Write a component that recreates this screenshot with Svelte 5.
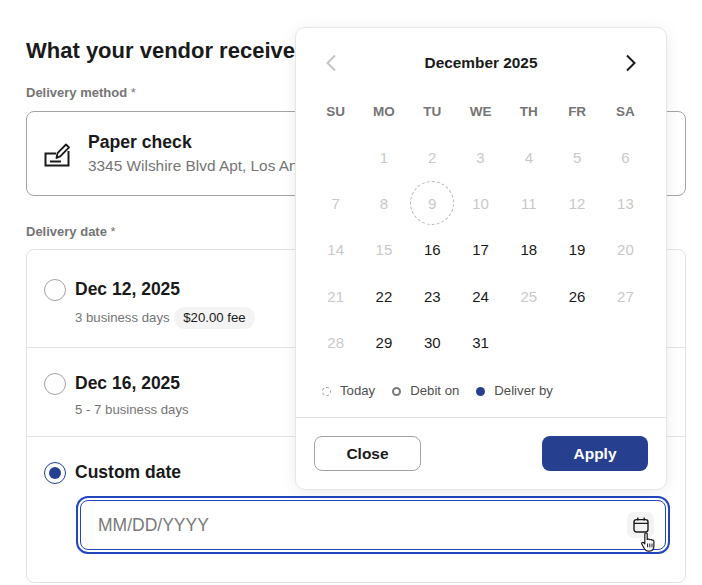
<script>
  const weekdays = ['SU', 'MO', 'TU', 'WE', 'TH', 'FR', 'SA'];
  const active = [16, 17, 18, 19, 22, 23, 24, 26, 29, 30, 31];
  const days = [null, ...Array.from({ length: 31 }, (_, i) => i + 1)];
</script>

<main class="page">
  <h1>What your vendor receives</h1>

  <div class="label">Delivery method <span class="star">*</span></div>
  <div class="method">
    <svg class="check-icon" width="26" height="26" viewBox="0 0 26 26" fill="none" stroke="#1a1a1a" stroke-width="2">
      <path d="M12 12.500H1.500V24.500h23V10" />
      <path d="M12.500 17l1-4.800 8.500-8.700 3 2.900-8.500 8.700z" stroke-linejoin="round" stroke-width="1.800" />
      <path d="M6 20.500h11" />
    </svg>
    <div class="method-text">
      <div class="method-title">Paper check</div>
      <div class="method-sub">3345 Wilshire Blvd Apt, Los Angeles</div>
    </div>
  </div>

  <div class="label date-label">Delivery date <span class="star">*</span></div>
  <div class="dates">
    <div class="row row-1">
      <span class="radio"></span>
      <div>
        <div class="row-title">Dec 12, 2025</div>
        <div class="row-sub">3 business days <span class="fee">$20.00 fee</span></div>
      </div>
    </div>
    <div class="row row-2">
      <span class="radio"></span>
      <div>
        <div class="row-title">Dec 16, 2025</div>
        <div class="row-sub">5 - 7 business days</div>
      </div>
    </div>
    <div class="row row-3">
      <span class="radio on"></span>
      <div class="custom">
        <div class="row-title">Custom date</div>
        <div class="input">
          <span class="placeholder">MM/DD/YYYY</span>
          <span class="cal-btn">
            <svg width="16" height="16" viewBox="0 0 16 16" fill="none" stroke="#1a1a1a" stroke-width="1.400">
              <rect x="1" y="2.600" width="14" height="12.400" rx="2.400" />
              <path d="M1 6.400h14M4.800 .6v3M11.200 .6v3" />
            </svg>
          </span>
          <svg class="hand" width="15" height="20" viewBox="0 0 15 20">
            <path d="M3.800 2.200c0-1.600 2.400-1.600 2.400 0v5.200l.6-.1c.8-.4 1.700-.3 2.100.4.800-.4 1.700-.2 2 .5.900-.3 2 .2 2 1.300v4.600c0 2.800-1.500 5-4.300 5H7c-1.700 0-2.600-.8-3.400-2.100L.9 12.200c-.8-1.300 1-2.600 2-1.400l.9 1.200z" fill="#fff" stroke="#1a1a1a" stroke-width="1.200" stroke-linejoin="round" />
            <path d="M6.600 11.500v3.800M8.800 11.500v3.800M11 11.500v3.800" stroke="#1a1a1a" stroke-width="1" />
          </svg>
        </div>
      </div>
    </div>
  </div>

  <section class="popover">
    <div class="cal-head">
      <svg width="12" height="18" viewBox="0 0 12 18" fill="none" stroke="#c4c4c4" stroke-width="2"><path d="M10 1.500 2.500 9l7.500 7.500" /></svg>
      <strong>December 2025</strong>
      <svg width="12" height="18" viewBox="0 0 12 18" fill="none" stroke="#1a1a1a" stroke-width="2"><path d="M2 1.500 9.500 9 2 16.500" /></svg>
    </div>
    <div class="grid">
      {#each weekdays as w}
        <div class="wd">{w}</div>
      {/each}
      {#each days as d}
        <div class="day" class:active={active.includes(d)}>
          {#if d === 9}<span class="today">{d}</span>{:else if d}{d}{/if}
        </div>
      {/each}
    </div>
    <div class="legend">
      <span class="item"><i class="dot d-today"></i>Today</span>
      <span class="item"><i class="dot d-debit"></i>Debit on</span>
      <span class="item"><i class="dot d-deliver"></i>Deliver by</span>
    </div>
    <div class="cal-foot">
      <button class="btn close">Close</button>
      <button class="btn apply">Apply</button>
    </div>
  </section>
</main>

<style>
  :global(body) {
    margin: 0;
    background: #fff;
  }
  .page {
    position: relative;
    width: 702px;
    height: 585px;
    box-sizing: border-box;
    padding: 38px 16px 0 26px;
    overflow: hidden;
    font-family: "Liberation Sans", Arial, sans-serif;
    color: #1a1a1a;
  }
  h1 {
    margin: 0;
    font-size: 22px;
    line-height: 26px;
    font-weight: 700;
  }
  .label {
    margin-top: 21px;
    font-size: 13px;
    line-height: 16px;
    font-weight: 700;
    color: #757575;
  }
  .star {
    font-weight: 400;
  }
  .date-label {
    margin-top: 28px;
  }
  .method {
    margin-top: 10px;
    height: 85px;
    box-sizing: border-box;
    border: 1px solid #a3a3a3;
    border-radius: 8px;
    display: flex;
    align-items: center;
    gap: 18px;
    padding-left: 17px;
    white-space: nowrap;
    overflow: hidden;
  }
  .check-icon {
    flex: none;
  }
  .method-text {
    padding-bottom: 2px;
  }
  .method-title {
    font-size: 17.600px;
    line-height: 22px;
    font-weight: 700;
  }
  .method-sub {
    margin-top: 4px;
    font-size: 15.400px;
    line-height: 18px;
    color: #757575;
  }
  .dates {
    margin-top: 9px;
    height: 334px;
    box-sizing: border-box;
    border: 1px solid #e3e3e3;
    border-radius: 8px;
  }
  .row {
    display: flex;
    gap: 9px;
    padding: 29px 0 0 17px;
    box-sizing: border-box;
    border-bottom: 1px solid #e3e3e3;
  }
  .row-1 {
    height: 98px;
  }
  .row-2 {
    height: 89px;
    padding-top: 25px;
  }
  .row-3 {
    border-bottom: 0;
    padding-top: 25px;
  }
  .radio {
    flex: none;
    width: 22px;
    height: 22px;
    box-sizing: border-box;
    border: 1px solid #a3a3a3;
    border-radius: 50%;
    background: #fff;
  }
  .radio.on {
    border-color: #26408f;
    position: relative;
  }
  .radio.on::after {
    content: "";
    position: absolute;
    inset: 4px;
    border-radius: 50%;
    background: #26408f;
  }
  .row-title {
    font-size: 17.500px;
    line-height: 20px;
    font-weight: 700;
  }
  .row-sub {
    margin-top: 8px;
    font-size: 13.200px;
    line-height: 22px;
    height: 22px;
    color: #757575;
  }
  .row-2 .row-sub {
    margin-top: 6px;
  }
  .fee {
    display: inline-block;
    margin-left: 1px;
    padding: 0 9px;
    border-radius: 11px;
    background: #f3f3f3;
    color: #1a1a1a;
  }
  .custom {
    flex: 1;
  }
  .input {
    position: relative;
    margin: 14px 15px 0 1px;
    height: 58px;
    box-sizing: border-box;
    border: 2px solid #2346c0;
    border-radius: 12px;
    padding: 2px;
  }
  .input::before {
    content: "";
    position: absolute;
    inset: 2px;
    border: 1px solid #2346c0;
    border-radius: 8px;
  }
  .placeholder {
    position: absolute;
    left: 20px;
    top: 16px;
    font-size: 17.500px;
    line-height: 22px;
    color: #7a7a7a;
  }
  .cal-btn {
    position: absolute;
    right: 14px;
    top: 14px;
    width: 27px;
    height: 26px;
    border-radius: 7px;
    background: #f3f3f3;
    display: flex;
    align-items: center;
    justify-content: center;
  }
  .hand {
    position: absolute;
    right: 12px;
    top: 34px;
  }
  .popover {
    position: absolute;
    left: 295px;
    top: 27px;
    width: 372px;
    height: 463px;
    box-sizing: border-box;
    background: #fff;
    border: 1px solid #e6e6e6;
    border-radius: 10px;
    box-shadow: 0 2px 16px rgba(0, 0, 0, 0.08);
    display: flex;
    flex-direction: column;
  }
  .cal-head {
    display: flex;
    align-items: center;
    justify-content: space-between;
    height: 34px;
    margin-top: 18px;
    padding: 0 29px;
  }
  .cal-head strong {
    font-size: 15.400px;
    font-weight: 700;
    line-height: 34px;
  }
  .grid {
    display: grid;
    grid-template-columns: repeat(7, 48.300px);
    grid-auto-rows: 46.400px;
    margin-top: 7.500px;
    padding-left: 15.500px;
    font-size: 15px;
    color: #c9c9c9;
    text-align: center;
  }
  .wd {
    font-size: 13.500px;
    font-weight: 700;
    color: #757575;
    line-height: 48px;
  }
  .day {
    display: flex;
    align-items: center;
    justify-content: center;
  }
  .day.active {
    color: #1a1a1a;
  }
  .today {
    width: 44px;
    height: 44px;
    box-sizing: border-box;
    border: 1px dashed #b5b5b5;
    border-radius: 50%;
    display: flex;
    align-items: center;
    justify-content: center;
  }
  .legend {
    display: flex;
    gap: 17px;
    padding-left: 26px;
    margin-top: auto;
    font-size: 13.200px;
    line-height: 16px;
    color: #4f4f4f;
    margin-bottom: 18px;
  }
  .item {
    display: flex;
    align-items: center;
    gap: 9px;
  }
  .dot {
    width: 9px;
    height: 9px;
    box-sizing: border-box;
    border-radius: 50%;
  }
  .d-today {
    border: 1px dashed #9a9a9a;
  }
  .d-debit {
    border: 2px solid #7a7a7a;
  }
  .d-deliver {
    background: #26408f;
  }
  .cal-foot {
    display: flex;
    justify-content: space-between;
    border-top: 1px solid #e3e3e3;
    padding: 18px;
  }
  .btn {
    height: 35px;
    width: 107px;
    box-sizing: border-box;
    border-radius: 8px;
    font-family: inherit;
    font-size: 15.500px;
    font-weight: 700;
    padding: 0;
  }
  .close {
    background: #fff;
    border: 1px solid #a3a3a3;
    color: #1a1a1a;
  }
  .apply {
    width: 106px;
    background: #26408f;
    border: 0;
    color: #fff;
  }
</style>
